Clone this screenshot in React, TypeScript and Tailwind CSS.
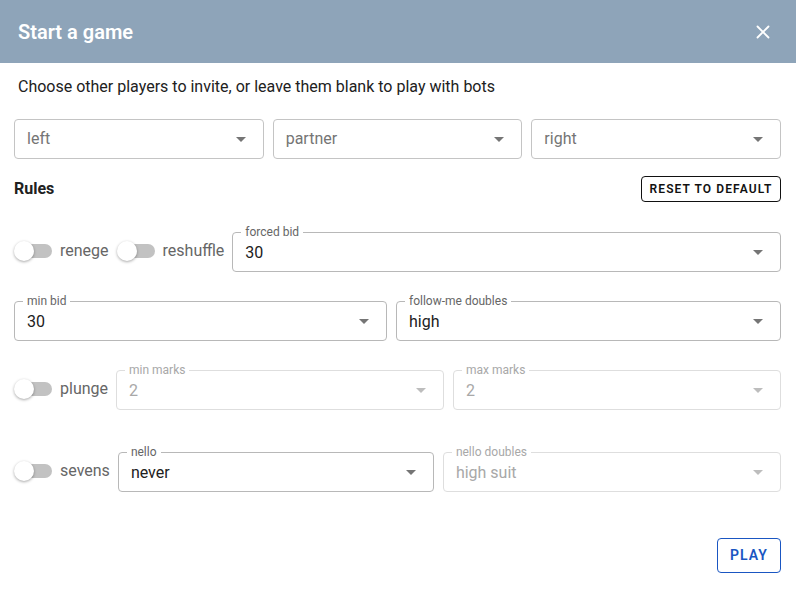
import React from 'react';
import { X } from 'lucide-react';

const Arrow: React.FC<{ disabled?: boolean }> = ({ disabled }) => (
  <svg width="10" height="5" viewBox="0 0 10 5" className="shrink-0">
    <path d="M0 0 L5 5 L10 0 Z" fill={disabled ? '#bdbdbd' : '#757575'} />
  </svg>
);

const Select: React.FC<{ placeholder: string }> = ({ placeholder }) => (
  <div className="h-10 flex items-center justify-between rounded border border-[#c4c4c4] pl-3 pr-[17px]">
    <span className="text-[16px] text-[#757575]">{placeholder}</span>
    <Arrow />
  </div>
);

interface FieldProps {
  label: string;
  value: string;
  disabled?: boolean;
  className?: string;
}

const Field: React.FC<FieldProps> = ({ label, value, disabled, className }) => (
  <div
    className={`relative h-10 flex items-center justify-between rounded border pl-3 pr-[17px] ${
      disabled ? 'border-[#dedede]' : 'border-[#b8b8b8]'
    } ${className ?? ''}`}
  >
    <span
      className={`absolute -top-[9px] left-[8px] bg-white px-1 text-[12px] leading-4 ${
        disabled ? 'text-[#a8a8a8]' : 'text-[#666]'
      }`}
    >
      {label}
    </span>
    <span className={`text-[16px] pt-[2px] ${disabled ? 'text-[#a8a8a8]' : 'text-[#212121]'}`}>{value}</span>
    <Arrow disabled={disabled} />
  </div>
);

const Toggle: React.FC<{ label: string }> = ({ label }) => (
  <div className="flex items-center shrink-0 -mt-[3px]">
    <div className="relative w-[38px] h-5">
      <div className="absolute left-[3px] top-[3px] w-[35px] h-[14px] rounded-full bg-[#c2c2c2]" />
      <div className="absolute left-0 top-0 w-5 h-5 rounded-full bg-white shadow-[0_1px_3px_rgba(0,0,0,0.35)]" />
    </div>
    <span className="ml-2 text-[16px] text-[#666]">{label}</span>
  </div>
);

export default function App() {
  return (
    <div className="w-[796px] h-[594px] bg-white font-['Roboto',sans-serif] overflow-hidden">
      <div className="h-[63px] bg-[#8ea4b9] flex items-center justify-between pl-[18px] pr-[22px]">
        <h1 className="text-white text-[20px] font-semibold">Start a game</h1>
        <X className="text-white" size={22} strokeWidth={2} />
      </div>

      <div className="pl-[14px] pr-[15px]">
        <p className="pl-1 pt-[14px] text-[16px] text-[#212121] leading-5">
          Choose other players to invite, or leave them blank to play with bots
        </p>

        <div className="mt-[22px] grid grid-cols-3 gap-[9px]">
          <Select placeholder="left" />
          <Select placeholder="partner" />
          <Select placeholder="right" />
        </div>

        <div className="mt-[17px] flex items-center justify-between">
          <h2 className="text-[16px] font-bold text-[#212121]">Rules</h2>
          <button className="h-[26px] w-[140px] rounded border border-[#111] text-[12px] font-semibold tracking-[1.1px] text-[#111]">
            RESET TO DEFAULT
          </button>
        </div>

        <div className="mt-[30px] flex items-center gap-2">
          <Toggle label="renege" />
          <Toggle label="reshuffle" />
          <Field label="forced bid" value="30" className="flex-1" />
        </div>

        <div className="mt-[29px] grid grid-cols-[373px_1fr] gap-[9px]">
          <Field label="min bid" value="30" />
          <Field label="follow-me doubles" value="high" />
        </div>

        <div className="mt-[29px] flex items-center gap-2">
          <Toggle label="plunge" />
          <div className="flex-1 grid grid-cols-2 gap-[9px]">
            <Field label="min marks" value="2" disabled />
            <Field label="max marks" value="2" disabled />
          </div>
        </div>

        <div className="mt-[42px] flex items-center gap-2">
          <Toggle label="sevens" />
          <div className="flex-1 grid grid-cols-[316px_1fr] gap-[9px]">
            <Field label="nello" value="never" />
            <Field label="nello doubles" value="high suit" disabled />
          </div>
        </div>

        <div className="mt-[46px] flex justify-end">
          <button className="h-[35px] w-[64px] rounded border border-[#1a56c2] text-[14px] font-semibold tracking-[1px] text-[#1a56c2]">
            PLAY
          </button>
        </div>
      </div>
    </div>
  );
}
